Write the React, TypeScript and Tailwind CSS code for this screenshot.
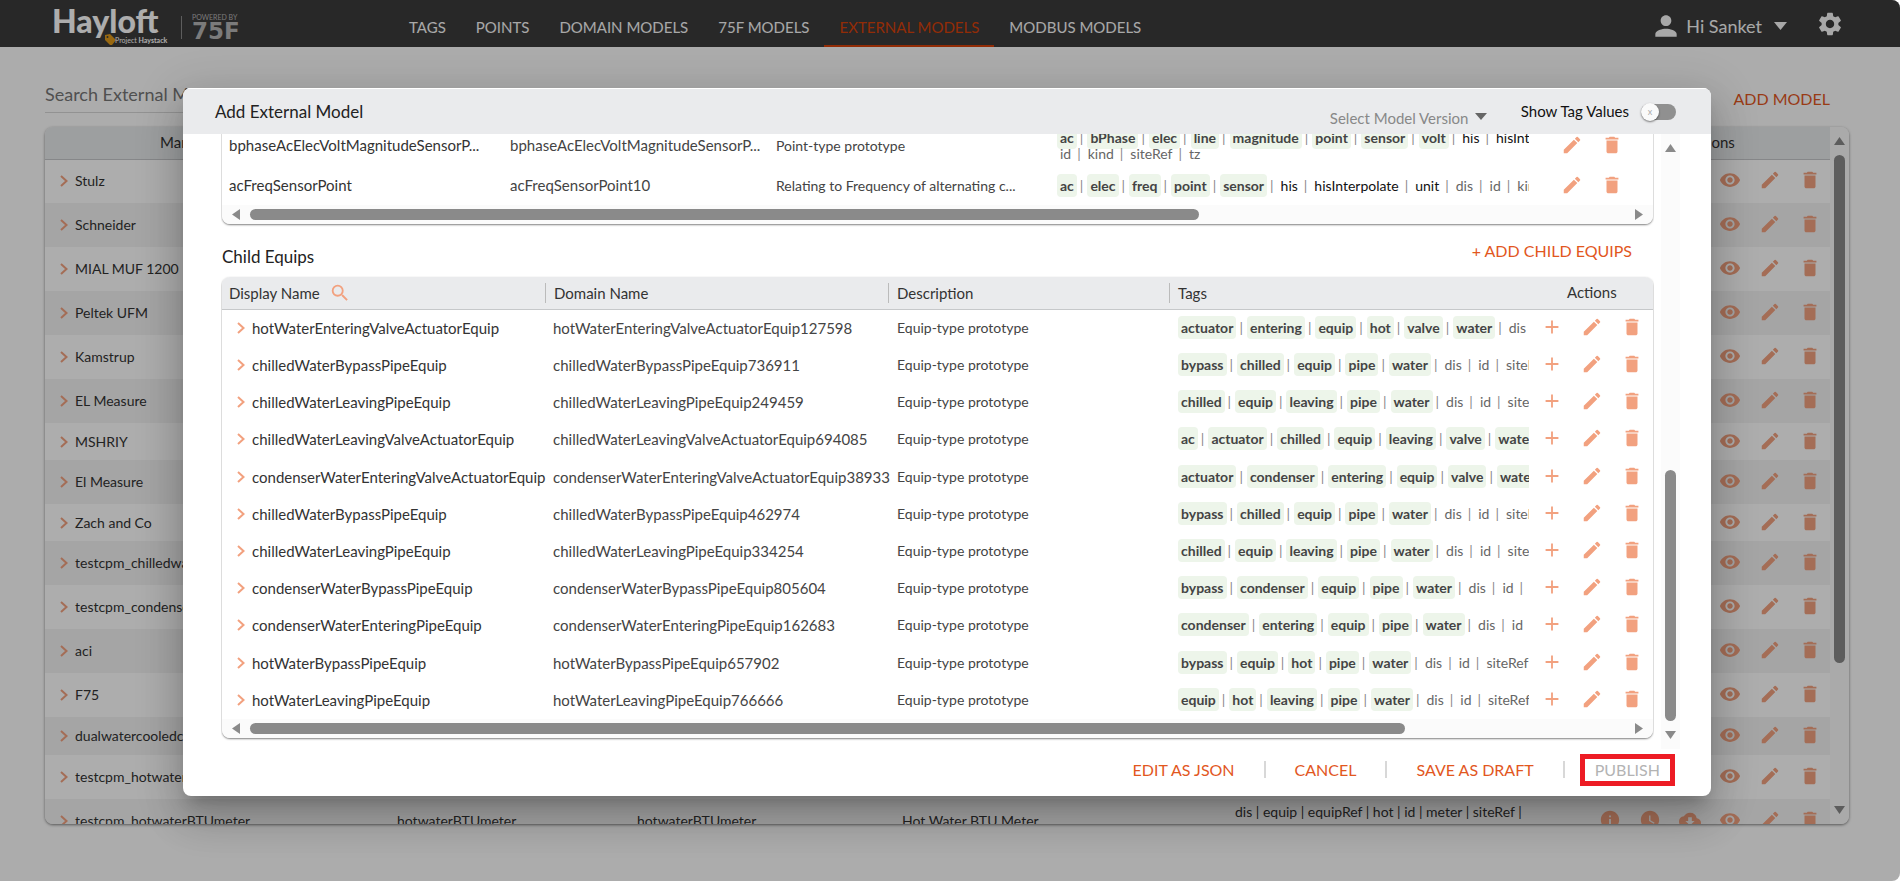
import React, { useState } from "react";
import {
  MdAdd,
  MdCloudDownload,
  MdDelete,
  MdEdit,
  MdInfo,
  MdPerson,
  MdSearch,
  MdSettings,
  MdVisibility,
  MdWatchLater,
} from "react-icons/md";

// A tag is either required (green chip), optional (dark) or inherited (grey)
interface TagList {
  required: string[];
  optional?: string[];
  inherited: string[];
}

interface Equip {
  name: string;
  domain: string;
  tags: TagList;
}

interface Manufacturer {
  name: string;
  height: string;
}

const navItems = ["TAGS", "POINTS", "DOMAIN MODELS", "75F MODELS", "EXTERNAL MODELS", "MODBUS MODELS"];

const manufacturers: Manufacturer[] = [
  { name: "Stulz", height: "h-[44px]" },
  { name: "Schneider", height: "h-[44px]" },
  { name: "MIAL MUF 1200", height: "h-[44px]" },
  { name: "Peltek UFM", height: "h-[44px]" },
  { name: "Kamstrup", height: "h-[44px]" },
  { name: "EL Measure", height: "h-[44px]" },
  { name: "MSHRIY", height: "h-[37px]" },
  { name: "El Measure", height: "h-[44px]" },
  { name: "Zach and Co", height: "h-[37px]" },
  { name: "testcpm_chilledwaterBTUmeter", height: "h-[44px]" },
  { name: "testcpm_condenserwaterBTUmeter", height: "h-[44px]" },
  { name: "aci", height: "h-[44px]" },
  { name: "F75", height: "h-[44px]" },
  { name: "dualwatercooledchiller", height: "h-[38px]" },
  { name: "testcpm_hotwaterplant", height: "h-[44px]" },
];

const inherited = ["dis", "id", "siteRef"];

const equips: Equip[] = [
  {
    name: "hotWaterEnteringValveActuatorEquip",
    domain: "hotWaterEnteringValveActuatorEquip127598",
    tags: { required: ["actuator", "entering", "equip", "hot", "valve", "water"], inherited: ["dis"] },
  },
  {
    name: "chilledWaterBypassPipeEquip",
    domain: "chilledWaterBypassPipeEquip736911",
    tags: { required: ["bypass", "chilled", "equip", "pipe", "water"], inherited },
  },
  {
    name: "chilledWaterLeavingPipeEquip",
    domain: "chilledWaterLeavingPipeEquip249459",
    tags: { required: ["chilled", "equip", "leaving", "pipe", "water"], inherited },
  },
  {
    name: "chilledWaterLeavingValveActuatorEquip",
    domain: "chilledWaterLeavingValveActuatorEquip694085",
    tags: { required: ["ac", "actuator", "chilled", "equip", "leaving", "valve", "water"], inherited },
  },
  {
    name: "condenserWaterEnteringValveActuatorEquip",
    domain: "condenserWaterEnteringValveActuatorEquip38933",
    tags: { required: ["actuator", "condenser", "entering", "equip", "valve", "water"], inherited },
  },
  {
    name: "chilledWaterBypassPipeEquip",
    domain: "chilledWaterBypassPipeEquip462974",
    tags: { required: ["bypass", "chilled", "equip", "pipe", "water"], inherited },
  },
  {
    name: "chilledWaterLeavingPipeEquip",
    domain: "chilledWaterLeavingPipeEquip334254",
    tags: { required: ["chilled", "equip", "leaving", "pipe", "water"], inherited },
  },
  {
    name: "condenserWaterBypassPipeEquip",
    domain: "condenserWaterBypassPipeEquip805604",
    tags: { required: ["bypass", "condenser", "equip", "pipe", "water"], inherited },
  },
  {
    name: "condenserWaterEnteringPipeEquip",
    domain: "condenserWaterEnteringPipeEquip162683",
    tags: { required: ["condenser", "entering", "equip", "pipe", "water"], inherited: ["dis", "id"] },
  },
  {
    name: "hotWaterBypassPipeEquip",
    domain: "hotWaterBypassPipeEquip657902",
    tags: { required: ["bypass", "equip", "hot", "pipe", "water"], inherited },
  },
  {
    name: "hotWaterLeavingPipeEquip",
    domain: "hotWaterLeavingPipeEquip766666",
    tags: { required: ["equip", "hot", "leaving", "pipe", "water"], inherited },
  },
];

const Arrow: React.FC<{ dir: "up" | "down" | "left" | "right" }> = ({ dir }) => {
  const points = {
    up: "0,8 5.5,0 11,8",
    down: "0,0 11,0 5.5,8",
    left: "8,0 8,11 0,5.5",
    right: "0,0 8,5.5 0,11",
  };
  const vertical = dir === "up" || dir === "down";
  return (
    <svg width={vertical ? 11 : 8} height={vertical ? 8 : 11} className="shrink-0 fill-[#8a8a8a]">
      <polygon points={points[dir]} />
    </svg>
  );
};

const Chevron: React.FC = () => (
  <svg width="8" height="12" viewBox="0 0 8 12" className="mr-[7px] shrink-0 fill-none stroke-[#f2a17f]" strokeWidth="2">
    <path d="M1 1l5.5 5L1 11" />
  </svg>
);

const HScroll: React.FC<{ thumb: string }> = ({ thumb }) => (
  <div className="flex h-[19px] items-center gap-[10px] bg-[#fbfbfb] px-[10px]">
    <Arrow dir="left" />
    <div className="flex-1">
      <div className={"h-[11px] rounded-full bg-[#8a8a8a] " + thumb} />
    </div>
    <Arrow dir="right" />
  </div>
);

const IconButton: React.FC<{ label: string; children: React.ReactNode }> = ({ label, children }) => (
  <button type="button" aria-label={label} className="flex w-10 items-center justify-center pb-[2px] text-[22px] text-[#f2a17f]">
    {children}
  </button>
);

const Tags: React.FC<{ tags: TagList }> = ({ tags }) => {
  const all = [
    ...tags.required.map((t) => ({ t, style: "rounded-sm bg-[#edf5ea] px-[3px] py-[3px] font-bold text-[#444]" })),
    ...(tags.optional || []).map((t) => ({ t, style: "px-[3px] text-[#111]" })),
    ...tags.inherited.map((t) => ({ t, style: "px-[3px] text-[#666]" })),
  ];
  return (
    <div className="overflow-hidden py-[3px] whitespace-nowrap">
      {all.map(({ t, style }, i) => (
        <React.Fragment key={t}>
          {i > 0 && <span className="mr-[4px] ml-[3px] text-[#888]">|</span>}
          <span className={style}>{t}</span>
        </React.Fragment>
      ))}
    </div>
  );
};

const Logo: React.FC = () => (
  <svg width="200" height="46" viewBox="0 0 200 46" className="shrink-0" fontFamily="Lato, sans-serif">
    <text x="0" y="32" fontSize="32" fontWeight="900" fill="#fff">Hayloft</text>
    <path d="M53 34l5-1 6 6-4 5h-2l-5-5z" fill="#e09a1a" />
    <circle cx="55.5" cy="36" r="1" fill="#3c3c3c" />
    <text x="63" y="42" fontSize="7" fill="#fff">
      Project <tspan fontWeight="700">Haystack</tspan>
    </text>
    <path d="M129.5 15v23" stroke="#8a8a8a" />
    <text x="140" y="19" fontSize="7" fill="#b5b5b5">POWERED BY</text>
    <text x="140" y="38" fontSize="23" fontWeight="700" fontFamily="DejaVu Sans, sans-serif" fill="#b5b5b5">75F</text>
  </svg>
);

const Header: React.FC = () => (
  <header className="flex h-[47px] shrink-0 items-center bg-[#3c3c3c] pr-[56px] pl-[52px] text-[#f8f8f8]">
    <Logo />
    <nav className="ml-[142px] flex h-full text-[15px]">
      {navItems.map((item) => (
        <a
          key={item}
          href="#"
          className={
            item === "EXTERNAL MODELS"
              ? "border-b-2 border-[#d8410a] px-[15px] pt-[15px] leading-6 text-[#d8410a]"
              : "px-[15px] pt-[15px] leading-6"
          }
        >
          {item}
        </a>
      ))}
    </nav>
    <button type="button" className="ml-auto flex items-center pt-[4px] text-lg">
      <MdPerson className="mr-[4px] text-[32px]" />
      Hi Sanket
      <svg width="13" height="8" className="ml-[12px] fill-current">
        <polygon points="0,0 13,0 6.5,8" />
      </svg>
    </button>
    <button type="button" aria-label="Settings" className="ml-[29px]">
      <MdSettings className="text-[28px]" />
    </button>
  </header>
);

const ManufacturerTable: React.FC = () => (
  <div className="flex min-h-0 flex-1 overflow-hidden rounded-lg bg-white shadow-[0_1px_3px_rgba(0,0,0,0.5)]">
    <div className="flex-1 overflow-hidden">
      <table className="w-full table-fixed text-left text-sm text-[#333]">
        <colgroup>
          <col className="w-[344px]" />
          <col className="w-[240px]" />
          <col className="w-[265px]" />
          <col className="w-[333px]" />
          <col className="w-[362px]" />
          <col className="w-[242px]" />
        </colgroup>
        <thead>
          <tr className="h-8 border-b border-[#c6c8ca] bg-[#e8eaec] text-[15px]">
            <th className="pl-[115px] font-normal">Manufacturer</th>
            <th colSpan={4} />
            <th className="text-center font-normal">Actions</th>
          </tr>
        </thead>
        <tbody>
          {manufacturers.map((m) => (
            <tr key={m.name} className={"even:bg-[#f3f3f3] " + m.height}>
              <td colSpan={5}>
                <div className="flex items-center pl-[15px]">
                  <Chevron />
                  {m.name}
                </div>
              </td>
              <td>
                <div className="flex justify-end pr-px">
                  <IconButton label="View"><MdVisibility /></IconButton>
                  <IconButton label="Edit"><MdEdit /></IconButton>
                  <IconButton label="Delete"><MdDelete /></IconButton>
                </div>
              </td>
            </tr>
          ))}
          <tr className="h-[44px] bg-[#f3f3f3]">
            <td>
              <div className="flex items-center pl-[15px]">
                <Chevron />
                testcpm_hotwaterBTUmeter
              </div>
            </td>
            <td className="pl-[8px]">hotwaterBTUmeter</td>
            <td className="pl-[8px]">hotwaterBTUmeter</td>
            <td className="pl-[8px]">Hot Water BTU Meter</td>
            <td className="pb-[18px] pl-[8px]">dis | equip | equipRef | hot | id | meter | siteRef |</td>
            <td>
              <div className="flex justify-end pr-px">
                <IconButton label="Info"><MdInfo /></IconButton>
                <IconButton label="History"><MdWatchLater /></IconButton>
                <IconButton label="Download"><MdCloudDownload /></IconButton>
                <IconButton label="View"><MdVisibility /></IconButton>
                <IconButton label="Edit"><MdEdit /></IconButton>
                <IconButton label="Delete"><MdDelete /></IconButton>
              </div>
            </td>
          </tr>
        </tbody>
      </table>
    </div>
    <div className="flex w-[19px] flex-col items-center gap-[10px] bg-[#fbfbfb] py-[10px]">
      <Arrow dir="up" />
      <div className="flex-1">
        <div className="h-[508px] w-[11px] rounded-full bg-[#8a8a8a]" />
      </div>
      <Arrow dir="down" />
    </div>
  </div>
);

const PointTable: React.FC = () => (
  <div className="shrink-0 overflow-hidden rounded-lg shadow-[0_1px_2px_rgba(0,0,0,0.5)]">
    <table className="w-full table-fixed text-left text-sm text-[#444]">
      <colgroup>
        <col className="w-[281px]" />
        <col className="w-[265px]" />
        <col className="w-[281px]" />
        <col className="w-[480px]" />
        <col className="w-[124px]" />
      </colgroup>
      <tbody>
        <tr className="h-[42px]">
          <td className="pl-[7px] text-[15px] text-[#333]">bphaseAcElecVoltMagnitudeSensorP...</td>
          <td className="pl-[7px] text-[15px]">bphaseAcElecVoltMagnitudeSensorP...</td>
          <td className="pl-[8px]">Point-type prototype</td>
          <td className="pl-[8px] leading-4">
            <Tags
              tags={{
                required: ["ac", "bPhase", "elec", "line", "magnitude", "point", "sensor", "volt"],
                optional: ["his", "hisInterpolate"],
                inherited: [],
              }}
            />
            <div className="-mt-[6px]">
              <Tags tags={{ required: [], inherited: ["id", "kind", "siteRef", "tz"] }} />
            </div>
          </td>
          <td>
            <div className="flex pl-[23px]">
              <IconButton label="Edit"><MdEdit /></IconButton>
              <IconButton label="Delete"><MdDelete /></IconButton>
            </div>
          </td>
        </tr>
        <tr className="h-[38px]">
          <td className="pl-[7px] text-[15px] text-[#333]">acFreqSensorPoint</td>
          <td className="pl-[7px] text-[15px]">acFreqSensorPoint10</td>
          <td className="pl-[8px]">Relating to Frequency of alternating c...</td>
          <td className="pl-[8px]">
            <Tags
              tags={{
                required: ["ac", "elec", "freq", "point", "sensor"],
                optional: ["his", "hisInterpolate", "unit"],
                inherited: ["dis", "id", "kind"],
              }}
            />
          </td>
          <td>
            <div className="flex pl-[23px]">
              <IconButton label="Edit"><MdEdit /></IconButton>
              <IconButton label="Delete"><MdDelete /></IconButton>
            </div>
          </td>
        </tr>
      </tbody>
    </table>
    <HScroll thumb="w-[69%]" />
  </div>
);

const EquipTable: React.FC = () => (
  <div className="shrink-0 overflow-hidden rounded-lg shadow-[0_1px_2px_rgba(0,0,0,0.5)]">
    <table className="h-[442px] w-full table-fixed text-left text-sm text-[#444]">
      <colgroup>
        <col className="w-[323px]" />
        <col className="w-[343px]" />
        <col className="w-[281px]" />
        <col className="w-[360px]" />
        <col className="w-[124px]" />
      </colgroup>
      <thead>
        <tr className="h-[32px] border-b border-[#c6c8ca] bg-[#eaebed] text-[15px] leading-5 text-[#333]">
          <th className="font-normal">
            <div className="flex items-center pl-[7px]">
              Display Name
              <button type="button" aria-label="Search display name" className="ml-[9px]">
                <MdSearch className="text-[22px] text-[#f2a17f]" />
              </button>
            </div>
          </th>
          <th className="font-normal"><div className="border-l border-[#bbb] pl-[8px]">Domain Name</div></th>
          <th className="font-normal"><div className="border-l border-[#bbb] pl-[8px]">Description</div></th>
          <th className="font-normal"><div className="border-l border-[#bbb] pl-[8px]">Tags</div></th>
          <th className="pb-[2px] pl-[38px] font-normal">Actions</th>
        </tr>
      </thead>
      <tbody>
        {equips.map((e) => (
          <tr key={e.domain}>
            <td className="pb-px">
              <div className="flex items-center pl-[15px] text-[15px] leading-5 text-[#333]">
                <Chevron />
                {e.name}
              </div>
            </td>
            <td className="pb-px pl-[8px] text-[15px] leading-5">{e.domain}</td>
            <td className="pb-px pl-[9px]">Equip-type prototype</td>
            <td className="pb-px pl-[9px]"><Tags tags={e.tags} /></td>
            <td className="pb-px">
              <div className="flex pl-[3px]">
                <IconButton label="Add"><MdAdd /></IconButton>
                <IconButton label="Edit"><MdEdit /></IconButton>
                <IconButton label="Delete"><MdDelete /></IconButton>
              </div>
            </td>
          </tr>
        ))}
      </tbody>
    </table>
    <HScroll thumb="w-[84%]" />
  </div>
);

const Separator: React.FC = () => <span className="mx-[29px] h-[17px] w-[2px] bg-[#d8d8d8]" />;

const AddModelDialog: React.FC = () => {
  const [showValues, setShowValues] = useState(false);

  return (
    <div
      role="dialog"
      aria-label="Add External Model"
      className="flex h-full flex-col overflow-hidden rounded-lg bg-white shadow-[0_11px_15px_-7px_rgba(0,0,0,0.2),0_24px_38px_3px_rgba(0,0,0,0.14),0_9px_46px_8px_rgba(0,0,0,0.12)]"
    >
      <div className="flex h-[46px] shrink-0 items-center border-t border-white bg-[#eaebed] pr-[35px] pl-[32px]">
        <h2 className="text-[17px] text-[#222]">Add External Model</h2>
        <div className="relative ml-auto pt-[12px]">
          <select aria-label="Model version" className="w-[157px] appearance-none bg-transparent text-[15px] text-[#888]">
            <option>Select Model Version</option>
          </select>
          <svg width="12" height="7" className="pointer-events-none absolute top-[19px] right-0 fill-[#666]">
            <polygon points="0,0 12,0 6,7" />
          </svg>
        </div>
        <label className="ml-[34px] flex items-center gap-[12px] text-[15px] text-[#111]">
          Show Tag Values
          <input
            type="checkbox"
            className="peer sr-only"
            checked={showValues}
            onChange={(e) => setShowValues(e.target.checked)}
          />
          <span className="flex h-[16px] w-[35px] items-center rounded-full bg-[#909090]">
            <span className="flex h-[18px] w-[18px] items-center justify-center rounded-full bg-[#fafafa] text-[9px] leading-none text-[#aaa] shadow-[0_1px_2px_rgba(0,0,0,0.5)]">
              x
            </span>
          </span>
        </label>
      </div>

      <div className="flex min-h-0 flex-1 pr-[31px] pl-[38px]">
        {/* scrolled to the end, so the upper table runs out of view */}
        <div className="flex flex-1 flex-col justify-end overflow-hidden px-px pb-[11px]">
          <PointTable />
          <div className="flex h-[53px] shrink-0 items-center justify-between pr-[21px]">
            <h3 className="pt-[12px] text-[17px] text-[#222]">Child Equips</h3>
            <button type="button" className="text-base text-[#e2571e]">+ ADD CHILD EQUIPS</button>
          </div>
          <EquipTable />
        </div>
        <div className="ml-[7px] flex w-[19px] flex-col items-center gap-[10px] bg-[#fbfbfb] py-[10px]">
          <Arrow dir="up" />
          <div className="flex flex-1 flex-col justify-end">
            <div className="h-[251px] w-[11px] rounded-full bg-[#8a8a8a]" />
          </div>
          <Arrow dir="down" />
        </div>
      </div>

      <div className="flex h-[47px] shrink-0 items-center justify-end pr-[36px] pb-[6px] text-base text-[#e2571e]">
        <button type="button">EDIT AS JSON</button>
        <Separator />
        <button type="button">CANCEL</button>
        <Separator />
        <button type="button">SAVE AS DRAFT</button>
        <span className="mr-[15px] ml-[29px] h-[17px] w-[2px] bg-[#d8d8d8]" />
        <button type="button" disabled className="h-8 border-[5px] border-[#ed1c24] px-[10px] leading-5 text-[#b3b3b3]">
          PUBLISH
        </button>
      </div>
    </div>
  );
};

const App: React.FC = () => {
  return (
    <div className="h-screen bg-white pr-[2px] font-['Lato',sans-serif]">
      <div className="relative flex h-full flex-col overflow-hidden rounded-r-lg bg-[#fefefe]">
        <Header />
        <main className="flex min-h-0 flex-1 flex-col pr-[51px] pb-[57px] pl-[45px]">
          <div className="flex h-[80px] shrink-0 items-start pt-[33px] pr-[19px]">
            <input
              aria-label="Search"
              placeholder="Search External Models"
              className="h-[33px] w-[300px] border-b border-[#d8d8d8] pb-[4px] text-lg text-[#333] placeholder:text-[#777]"
            />
            <p className="ml-[59px] pt-px text-[15px] leading-6 text-[#333]">
              results <span className="ml-[91px] text-[#d8410a]">20</span>
              <span className="ml-[99px]">1 - 20 of 151</span>
            </p>
            <button type="button" className="ml-auto pt-[7px] text-base text-[#e2571e]">ADD MODEL</button>
          </div>
          <ManufacturerTable />
        </main>

        <div className="absolute inset-0 bg-black/32 pt-[88px] pr-[189px] pb-[85px] pl-[183px]">
          <AddModelDialog />
        </div>
      </div>
    </div>
  );
};

export default App;
